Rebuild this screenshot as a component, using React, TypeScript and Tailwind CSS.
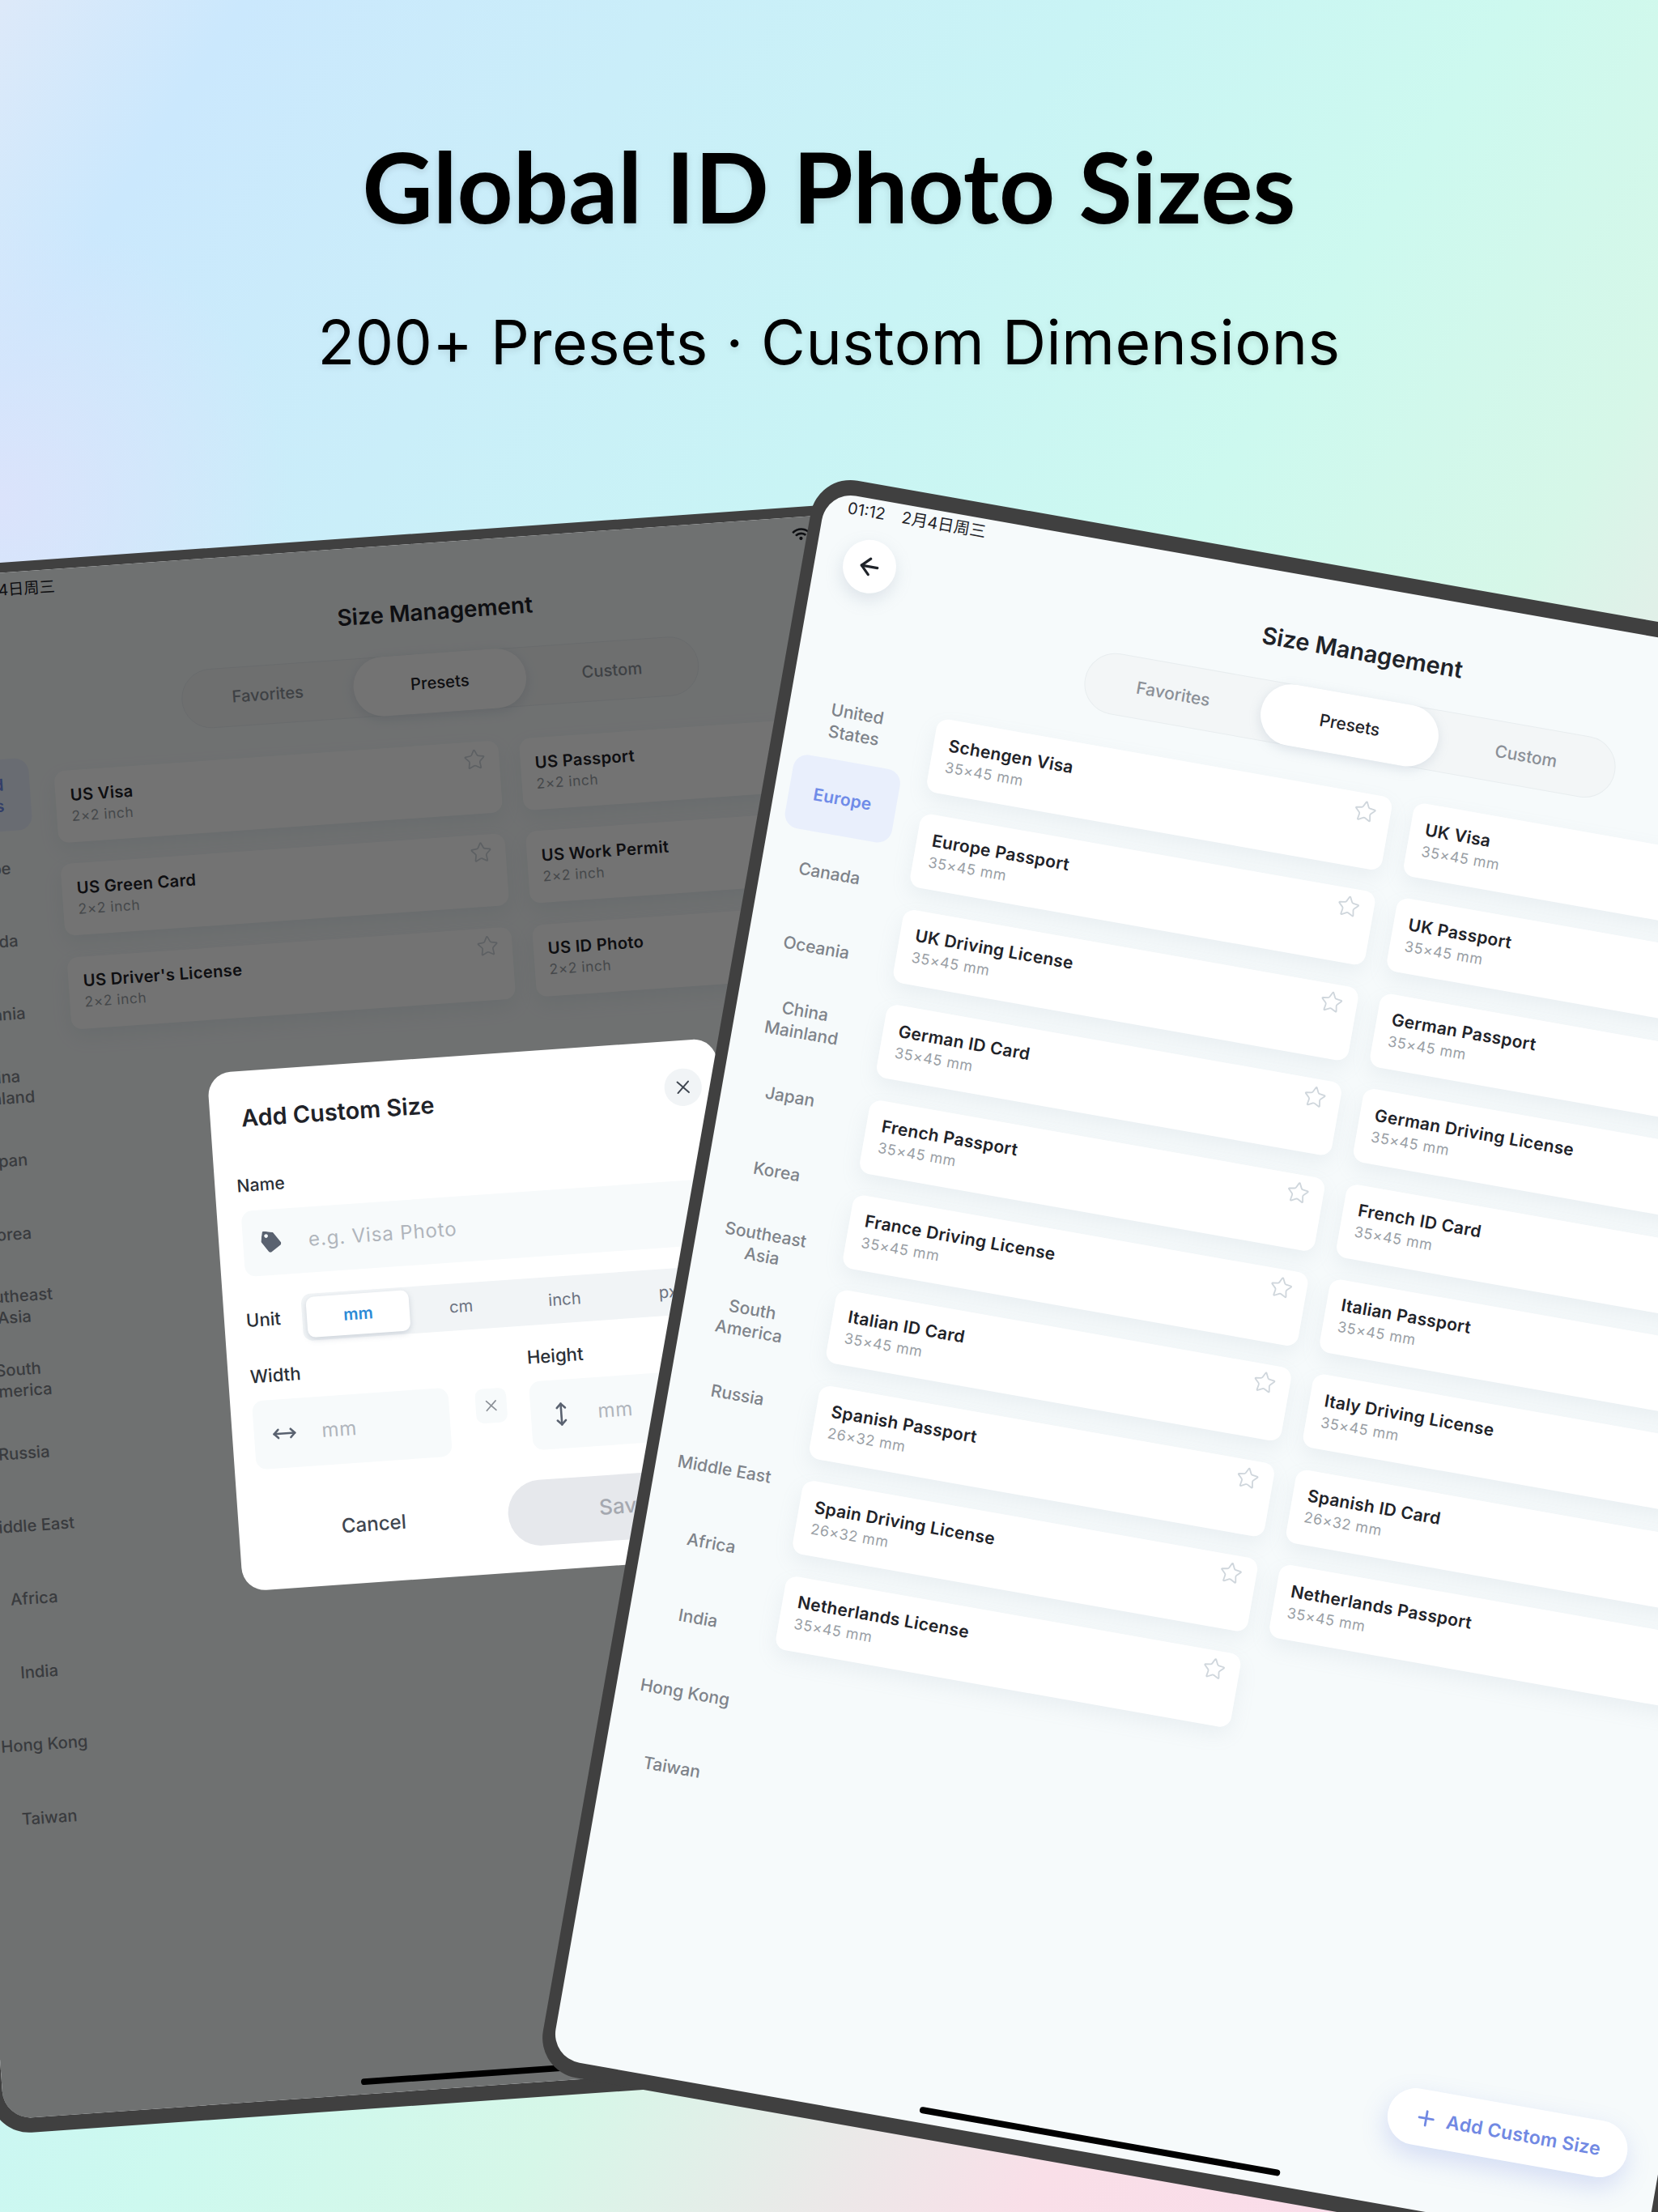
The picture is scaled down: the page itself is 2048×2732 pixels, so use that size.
import type { ReactNode } from "react";
import { ArrowLeft, MoveHorizontal, MoveVertical, Plus, Star, X } from "lucide-react";
import { FaTag, FaWifi } from "react-icons/fa";

type Row = { name: string; dim: string };

const regions = [
  ["United", "States"],
  ["Europe"],
  ["Canada"],
  ["Oceania"],
  ["China", "Mainland"],
  ["Japan"],
  ["Korea"],
  ["Southeast", "Asia"],
  ["South", "America"],
  ["Russia"],
  ["Middle East"],
  ["Africa"],
  ["India"],
  ["Hong Kong"],
  ["Taiwan"],
];

const euLeft: Row[] = [
  { name: "Schengen Visa", dim: "35×45 mm" },
  { name: "Europe Passport", dim: "35×45 mm" },
  { name: "UK Driving License", dim: "35×45 mm" },
  { name: "German ID Card", dim: "35×45 mm" },
  { name: "French Passport", dim: "35×45 mm" },
  { name: "France Driving License", dim: "35×45 mm" },
  { name: "Italian ID Card", dim: "35×45 mm" },
  { name: "Spanish Passport", dim: "26×32 mm" },
  { name: "Spain Driving License", dim: "26×32 mm" },
  { name: "Netherlands License", dim: "35×45 mm" },
];

const euRight: Row[] = [
  { name: "UK Visa", dim: "35×45 mm" },
  { name: "UK Passport", dim: "35×45 mm" },
  { name: "German Passport", dim: "35×45 mm" },
  { name: "German Driving License", dim: "35×45 mm" },
  { name: "French ID Card", dim: "35×45 mm" },
  { name: "Italian Passport", dim: "35×45 mm" },
  { name: "Italy Driving License", dim: "35×45 mm" },
  { name: "Spanish ID Card", dim: "26×32 mm" },
  { name: "Netherlands Passport", dim: "35×45 mm" },
];

const usLeft: Row[] = [
  { name: "US Visa", dim: "2×2 inch" },
  { name: "US Green Card", dim: "2×2 inch" },
  { name: "US Driver's License", dim: "2×2 inch" },
];

const usRight: Row[] = [
  { name: "US Passport", dim: "2×2 inch" },
  { name: "US Work Permit", dim: "2×2 inch" },
  { name: "US ID Photo", dim: "2×2 inch" },
];

function SizeCard({ row }: { row: Row }) {
  return (
    <div className="relative flex h-[92px] flex-col justify-center rounded-[14px] bg-white pb-[5px] pl-[19px] shadow-[0_10px_24px_rgba(148,163,184,0.12)]">
      <div className="text-[21px] leading-[29px] font-semibold tracking-[0.3px] text-[#1f2329]">{row.name}</div>
      <div className="text-[18px] leading-[25px] tracking-[0.6px] text-[#9a9fa6]">{row.dim}</div>
      <Star className="absolute top-[8px] right-[17px] h-[29px] w-[29px] text-[#cfd6dc]" strokeWidth={1.5} />
    </div>
  );
}

function Screen({
  active,
  left,
  right,
  shift,
  children,
}: {
  active: number;
  left: Row[];
  right: Row[];
  shift: string;
  children?: ReactNode;
}) {
  return (
    <div className={`relative flex h-full w-full flex-col overflow-hidden rounded-[36px] bg-[#f6fafb] ${shift}`}>
      {/* status bar */}
      <div className="flex h-[32px] items-center justify-between pr-[200px] pl-[29px] text-[20px] text-[#1f2329]">
        <div className="flex gap-[21px]">
          <span>01:12</span>
          <span>2月4日周三</span>
        </div>
        <FaWifi className="h-[22px] w-[22px]" />
      </div>

      {/* header */}
      <div className="mt-[18px] grid h-[66px] grid-cols-[1fr_auto_1fr] items-center pl-[35px]">
        <div className="flex h-[66px] w-[66px] items-center justify-center rounded-full bg-white shadow-[0_8px_20px_rgba(148,163,184,0.25)]">
          <ArrowLeft className="h-[34px] w-[34px] text-[#1f2329]" strokeWidth={2.25} />
        </div>
        <div className="-mt-[2px] pr-[35px] text-[29px] font-semibold text-[#1f2329]">Size Management</div>
        <div />
      </div>

      {/* tabs */}
      <div className="mx-auto mt-[19px] flex h-[76px] w-[665px] items-center rounded-full border border-[#e8edef] bg-[#f3f6f7] text-[21px] font-medium text-[#8b9097]">
        <div className="flex-1 text-center">Favorites</div>
        <div className="flex h-[76px] w-[222px] items-center justify-center rounded-full bg-white text-[#1f2329] shadow-[0_4px_14px_rgba(148,163,184,0.25)]">
          Presets
        </div>
        <div className="flex-1 text-center">Custom</div>
      </div>

      {/* body */}
      <div className="mt-[20px] flex pr-[20px] pl-[21px]">
        <div className="w-[128px] shrink-0">
          {regions.map((lines, i) => (
            <div key={i} className="flex h-[93.4px] items-center justify-center">
              <div
                className={
                  i === active
                    ? "flex h-[92px] w-[134px] shrink-0 flex-col items-center justify-center rounded-[18px] bg-[#e9effc] text-[21px] leading-[27px] font-semibold tracking-[0.2px] text-[#6f8be8]"
                    : "flex flex-col items-center text-[21px] leading-[27px] font-medium text-[#7e838a]"
                }
              >
                {lines.map((l) => (
                  <span key={l} className="whitespace-nowrap">
                    {l}
                  </span>
                ))}
              </div>
            </div>
          ))}
        </div>
        <div className="ml-[35px] grid flex-1 grid-cols-2 items-start gap-x-[27px] pt-[21px]">
          <div className="flex flex-col gap-[27.4px]">
            {left.map((r) => (
              <SizeCard key={r.name} row={r} />
            ))}
          </div>
          <div className="flex flex-col gap-[27.4px]">
            {right.map((r) => (
              <SizeCard key={r.name} row={r} />
            ))}
          </div>
        </div>
      </div>

      {/* floating button + home bar */}
      <div className="absolute right-[42px] bottom-[79px] flex h-[70px] w-[300px] items-center justify-center gap-[10px] rounded-full bg-white text-[23px] font-semibold tracking-[0.2px] text-[#7189e3] shadow-[0_12px_30px_rgba(113,137,227,0.25)]">
        <Plus className="h-[30px] w-[30px]" strokeWidth={2.25} />
        Add Custom Size
      </div>
      <div className="absolute bottom-[12px] left-1/2 h-[8px] w-[452px] -translate-x-1/2 rounded-full bg-black" />

      {children}
    </div>
  );
}

function CustomSizeDialog() {
  return (
    <div className="absolute inset-0 flex items-center justify-center bg-black/55 pt-[4px] pr-[12px]">
      <div className="relative h-[664px] w-[654px] rounded-[30px] bg-white px-[28px]">
        <div className="pt-[42px] pl-[12px] text-[30px] leading-[36px] font-semibold text-[#1f2329]">Add Custom Size</div>
        <div className="absolute top-[36px] right-[22px] flex h-[48px] w-[48px] items-center justify-center rounded-full bg-[#f1f4f6]">
          <X className="h-[28px] w-[28px] text-[#3f4650]" strokeWidth={1.75} />
        </div>

        <div className="mt-[54px] text-[22px] leading-[28px] font-medium text-[#2a2f36]">Name</div>
        <div className="mt-[19px] ml-[3px] flex h-[84px] items-center gap-[35px] rounded-[14px] bg-[#f7fafb] pl-[23px]">
          <FaTag className="h-[26px] w-[26px] rotate-[10deg] text-[#5a6270]" />
          <span className="text-[25px] tracking-[0.9px] text-[#b0b5bc]">e.g. Visa Photo</span>
        </div>

        <div className="mt-[27px] flex h-[60px] items-center">
          <div className="w-[72px] text-[23px] font-medium text-[#2a2f36]">Unit</div>
          <div className="mr-[-17px] flex h-[60px] flex-1 items-center rounded-[12px] bg-[#f1f4f6] px-[6px] text-[21px] text-[#6b7280]">
            <div className="flex h-[52px] w-[132px] items-center justify-center rounded-[10px] bg-white font-semibold text-[#2b8ad6] shadow-[0_3px_8px_rgba(100,116,139,0.25)]">
              mm
            </div>
            <div className="flex-1 text-center">cm</div>
            <div className="flex-1 text-center">inch</div>
            <div className="flex-1 text-center">px</div>
          </div>
        </div>

        <div className="mt-[27px] grid grid-cols-[252px_104px_252px]">
          <div className="text-[23px] leading-[28px] font-medium text-[#2a2f36]">Width</div>
          <div />
          <div className="text-[23px] leading-[28px] font-medium text-[#2a2f36]">Height</div>
          <div className="mt-[17px] flex h-[88px] items-center gap-[32px] rounded-[14px] bg-[#f7fafb] pl-[23px]">
            <MoveHorizontal className="h-[32px] w-[32px] text-[#5a6270]" strokeWidth={2} />
            <span className="text-[25px] tracking-[0.6px] text-[#b0b5bc]">mm</span>
          </div>
          <div className="mt-[22px] flex justify-center pl-[3px]">
            <div className="flex h-[44px] w-[40px] items-center justify-center rounded-[10px] bg-[#f7fafb]">
              <X className="h-[24px] w-[24px] text-[#8b9097]" strokeWidth={1.75} />
            </div>
          </div>
          <div className="mt-[17px] flex h-[88px] items-center gap-[31px] rounded-[14px] bg-[#f7fafb] pl-[23px]">
            <MoveVertical className="h-[32px] w-[32px] text-[#5a6270]" strokeWidth={2} />
            <span className="text-[25px] tracking-[0.6px] text-[#b0b5bc]">mm</span>
          </div>
        </div>

        <div className="mt-[38px] grid grid-cols-2 gap-[32px] pl-[5px] text-[25px] font-medium">
          <div className="flex h-[84px] items-center justify-center text-[#3f4650]">Cancel</div>
          <div className="flex h-[84px] items-center justify-center rounded-full bg-[#e6e8ec] pl-[18px] text-[27px] text-[#a5a8b0]">Save</div>
        </div>
      </div>
    </div>
  );
}

export default function App() {
  return (
    <div className="relative h-[2732px] w-[2048px] overflow-hidden bg-[radial-gradient(circle_at_0px_620px,#dbe3fb_0px,rgba(219,227,251,0)_360px),linear-gradient(122deg,#dde9f9_0%,#cbe8fd_8%,#c9f4f5_36%,#cdf9ef_50%,#d6f7e8_62%,#f9dfe8_79%,#fbd9ea_100%)] font-['Inter','Noto_Sans_CJK_SC',sans-serif] text-black">
      <div className="flex flex-col items-center pt-[150px]">
        <h1 className="font-['Lato',sans-serif] text-[120.5px] leading-[160px] font-bold [text-shadow:0_3px_8px_rgba(0,0,0,0.12)]">
          Global ID Photo Sizes
        </h1>
        <p className="mt-[63px] text-[75px] leading-[100px] tracking-[0.5px] [text-shadow:0_3px_8px_rgba(0,0,0,0.1)]">
          200+ Presets · Custom Dimensions
        </p>
      </div>

      {/* tablet behind, with the dialog open */}
      <div className="absolute top-[705px] left-[-144px] box-content h-[1973px] w-[1372px] origin-top-left scale-x-[0.963] scale-y-[0.966] rotate-[-4deg] rounded-[50px] border-x-[16px] border-t-[13px] border-b-[19px] border-[#404040] bg-[#404040]">
        <Screen active={0} left={usLeft} right={usRight} shift="pt-[6px]">
          <CustomSizeDialog />
        </Screen>
      </div>

      {/* tablet in front */}
      <div className="absolute top-[585px] left-[1010px] box-content h-[1965px] w-[1372px] origin-top-left rotate-[10deg] rounded-[50px] border-x-[15px] border-y-[19px] border-[#404040] bg-[#404040]">
        <Screen active={1} left={euLeft} right={euRight} shift="" />
      </div>
    </div>
  );
}
